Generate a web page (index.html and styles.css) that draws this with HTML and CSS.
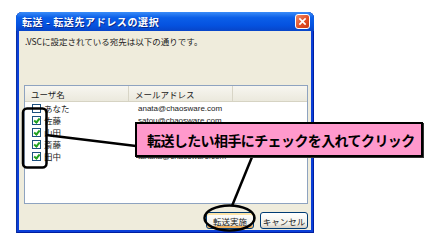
FILE: index.html
```html
<!DOCTYPE html>
<html lang="ja">
<head>
  <meta charset="UTF-8" />
  <title>転送 - 転送先アドレスの選択</title>
  <link rel="stylesheet" href="styles.css">
</head>
<body>
  <div class="stage">
    <div class="window">
      <div class="titlebar">
        <span class="title">転送 - 転送先アドレスの選択</span>
        <span class="close">
          <svg viewBox="0 0 10 10" width="9" height="9">
            <path d="M1.5,1.5 L8.5,8.5 M8.5,1.5 L1.5,8.5" stroke="#fff" stroke-width="1.8" />
          </svg>
        </span>
      </div>
      <div class="content">
        <p class="lead">.VSCに設定されている宛先は以下の通りです。</p>
        <div class="list">
          <div class="header">
            <span class="col-name">ユーザ名</span>
            <span class="col-mail">メールアドレス</span>
            <span class="col-rest"></span>
          </div>
          <div class="row"><span class="cb"></span><span class="name">あなた</span><span class="mail">anata@chaosware.com</span></div>
          <div class="row"><span class="cb on"></span><span class="name">佐藤</span><span class="mail">satou@chaosware.com</span></div>
          <div class="row"><span class="cb on"></span><span class="name">山田</span><span class="mail">yamada@chaosware.com</span></div>
          <div class="row"><span class="cb on"></span><span class="name">斎藤</span><span class="mail">saitou@chaosware.com</span></div>
          <div class="row"><span class="cb on"></span><span class="name">田中</span><span class="mail">tanaka@chaosware.com</span></div>
        </div>
        <div class="buttons">
          <button class="btn default">転送実施</button>
          <button class="btn">キャンセル</button>
        </div>
      </div>
    </div>

    <svg class="marks" width="437" height="244" viewBox="0 0 437 244">
      <rect x="23" y="108.5" width="23.5" height="59" rx="4" fill="none" stroke="#000" stroke-width="2.5" />
      <line x1="46" y1="135" x2="136" y2="146" stroke="#000" stroke-width="2.5" />
      <line x1="252" y1="157" x2="232" y2="206" stroke="#000" stroke-width="2.5" />
      <ellipse cx="229.5" cy="218" rx="25" ry="12.5" fill="none" stroke="#000" stroke-width="2.5" />
    </svg>

    <div class="callout">転送したい相手にチェックを入れてクリック</div>
  </div>
</body>
</html>
```

FILE: styles.css
```css
body {
  margin: 0;
  background: #fff;
  font-family: "Noto Sans CJK JP", "Noto Sans", sans-serif;
}
.stage {
  position: relative;
  width: 437px;
  height: 244px;
  padding: 12px 0 0 16px;
  box-sizing: border-box;
}
.window {
  width: 298px;
  height: 221px;
  display: flex;
  flex-direction: column;
  background: #0a3fd8;
  border-radius: 6px 6px 0 0;
  padding: 0 3px 3px 3px;
  box-sizing: border-box;
  box-shadow: inset 1px 0 0 #0b2f9e, inset -1px 0 0 #001ea0, inset 0 -1px 0 #001ea0;
}
.titlebar {
  height: 19px;
  display: flex;
  align-items: center;
  justify-content: space-between;
  background: linear-gradient(#3a8cf8, #0b5fe8 30%, #0552e0 70%, #0845c8);
  border-radius: 6px 6px 0 0;
  margin: 0 -3px;
  padding: 0 4px 0 6px;
}
.title {
  color: #fff;
  font-size: 10px;
  font-weight: bold;
  letter-spacing: 0.6px;
  text-shadow: 1px 1px 0 #0a2a8a;
}
.close {
  width: 13px;
  height: 13px;
  border: 1px solid #fff;
  border-radius: 3px;
  background: linear-gradient(135deg, #f08c68, #e04b22 60%, #c83a14);
  display: flex;
  align-items: center;
  justify-content: center;
}
.content {
  flex: 1;
  background: #efecdc;
  display: flex;
  flex-direction: column;
  padding: 0 3px 0 5px;
}
.lead {
  margin: 4px 0 0 1px;
  font-size: 8.5px;
  color: #222;
  height: 50px;
}
.list {
  height: 119px;
  background: #fff;
  border: 1px solid #8ea3c0;
  box-sizing: border-box;
}
.header {
  display: flex;
  height: 15px;
  background: linear-gradient(#f7f6f0, #ebe9dd);
  border-bottom: 1px solid #d6d3c3;
  font-size: 8.5px;
  color: #222;
}
.header span {
  display: flex;
  align-items: center;
  border-right: 1px solid #d8d5c6;
  box-sizing: border-box;
}
.col-name {
  width: 104px;
  padding-left: 6px;
}
.col-mail {
  width: 104px;
  padding-left: 6px;
}
.col-rest {
  flex: 1;
  border-right: none !important;
}
.row {
  display: flex;
  align-items: center;
  height: 12px;
  font-size: 8.5px;
  color: #222;
  padding-left: 7px;
}
.row:first-of-type {
  margin-top: 1px;
}
.cb {
  width: 7px;
  height: 7px;
  border: 1px solid #1c5180;
  background: #fff;
  margin-right: 3px;
  position: relative;
}
.cb.on::after {
  content: "";
  position: absolute;
  left: 2px;
  top: 0;
  width: 1.5px;
  height: 4px;
  border: solid #21a121;
  border-width: 0 2px 2px 0;
  transform: rotate(40deg);
}
.name {
  width: 94px;
}
.mail {
  font-family: "Liberation Sans", sans-serif;
  font-size: 8px;
}
.buttons {
  display: flex;
  justify-content: flex-end;
  gap: 6px;
  margin-top: 8px;
}
.btn {
  font-family: "Noto Sans CJK JP", sans-serif;
  font-size: 8.5px;
  height: 17px;
  width: 48px;
  padding: 0;
  border: 1px solid #003c74;
  border-radius: 3px;
  background: linear-gradient(#fff, #f2f1ea 70%, #d6d0c5);
  color: #222;
}
.btn.default {
  box-shadow: inset 0 -2px 0 #f0b060, inset 0 2px 0 #fde4a8;
}
.marks {
  position: absolute;
  left: 0;
  top: 0;
  pointer-events: none;
}
.callout {
  position: absolute;
  left: 135px;
  top: 122px;
  width: 288px;
  height: 35px;
  box-sizing: border-box;
  background: #ff99cc;
  border: 2px solid #000;
  box-shadow: 1px 1px 0 #333;
  font-size: 14px;
  font-weight: bold;
  letter-spacing: -0.6px;
  display: flex;
  align-items: center;
  padding-left: 10px;
  color: #000;
  white-space: nowrap;
}
```
